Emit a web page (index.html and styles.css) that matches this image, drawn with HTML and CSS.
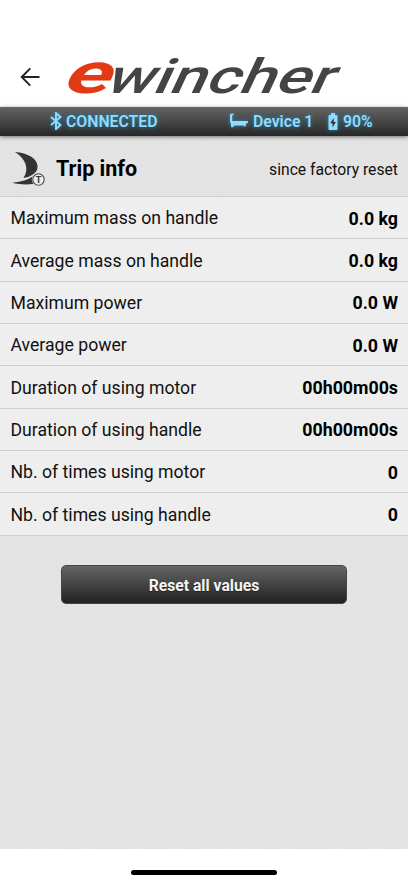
FILE: index.html
```html
<!DOCTYPE html>
<html lang="en">
<head>
    <meta charset="UTF-8">
    <meta name="viewport" content="width=device-width, initial-scale=1.0">
    <title>Ewincher - Trip info</title>
    <link rel="stylesheet" href="styles.css">
</head>
<body>
    <header class="top-bar">
        <a class="back" aria-label="Back">
            <svg width="20" height="20" viewBox="0 0 20 20" fill="none" stroke="#222" stroke-width="1.9">
                <path d="M19.500 10H2M10.300 1.400L1.700 10l8.600 8.600"/>
            </svg>
        </a>
        <svg class="logo" width="276" height="44" viewBox="0 0 276 44">
            <g transform="translate(0 38) skewX(-25)">
                <text class="logo-e" x="-7" y="0" textLength="47" lengthAdjust="spacingAndGlyphs">e</text>
                <text class="logo-word" x="36" y="0" textLength="227" lengthAdjust="spacingAndGlyphs">wincher</text>
            </g>
        </svg>
    </header>

    <div class="status-bar">
        <div class="connection">
            <svg width="12" height="18" viewBox="0 0 12 18" fill="none" stroke="#8fdcff" stroke-width="1.900">
                <path d="M1 5l9.500 8L6 17V1l4.500 4L1 13"/>
            </svg>
            <span>CONNECTED</span>
        </div>
        <div class="device">
            <svg width="20" height="16" viewBox="0 0 20 16" fill="#8fdcff">
                <path d="M1 1L4.500 .3V2.200L3.200 2.500V8H19v1.800l-1.800.8-1 3.400-1.700-1.600-9.300.2-1.200 1.600H2.200L1.900 11 1 9z"/>
            </svg>
            <span>Device 1</span>
        </div>
        <div class="battery">
            <svg width="10" height="17" viewBox="0 0 10 17">
                <path fill="#8fdcff" d="M3 0h4v2h1.500Q9.500 2 9.500 3v13q0 1-1 1h-7q-1 0-1-1V3q0-1 1-1H3z"/>
                <path fill="#333" d="M5.700 5L2.200 10.200h2.300V14.500L7.900 9H5.700z"/>
            </svg>
            <span>90%</span>
        </div>
    </div>

    <main>
        <div class="title-row">
            <svg width="35" height="36" viewBox="0 0 35 36">
                <path fill="#333" d="M4 1C17 2 26 7.500 26.500 15c.1 4-1.500 7.500-4 10L12.500 27C18.500 18 15 8 4 1z"/>
                <path fill="#e4e4e4" d="M11 28C18 26.500 24 23 27 18l1 4C23 27 17 29.500 11 30z"/>
                <path fill="#333" d="M1 31.700C11 31 18 28.500 25.500 23l.5 1.500-4 8.500C15 33.800 8 33.500 1 31.700z"/>
                <circle cx="27.500" cy="28.500" r="6.700" fill="#e4e4e4"/>
                <circle cx="27.500" cy="28.500" r="5.700" fill="#ececec" stroke="#444" stroke-width="1.100"/>
                <text class="badge" x="27.500" y="31.700" text-anchor="middle">T</text>
            </svg>
            <h1>Trip info</h1>
            <span class="since">since factory reset</span>
        </div>

        <ul class="values">
            <li><span>Maximum mass on handle</span><b>0.0 kg</b></li>
            <li><span>Average mass on handle</span><b>0.0 kg</b></li>
            <li><span>Maximum power</span><b>0.0 W</b></li>
            <li><span>Average power</span><b>0.0 W</b></li>
            <li><span>Duration of using motor</span><b>00h00m00s</b></li>
            <li><span>Duration of using handle</span><b>00h00m00s</b></li>
            <li><span>Nb. of times using motor</span><b>0</b></li>
            <li><span>Nb. of times using handle</span><b>0</b></li>
        </ul>

        <button class="reset">Reset all values</button>
    </main>

    <footer>
        <div class="home-line"></div>
    </footer>
</body>
</html>
```
FILE: styles.css
```css
* {
    box-sizing: border-box;
}

body {
    margin: 0;
    height: 883px;
    display: flex;
    flex-direction: column;
    overflow: hidden;
    background: #fff;
    color: #111;
    font-family: Roboto, sans-serif;
}

.top-bar {
    height: 107px;
    padding: 55px 0 0 20px;
    display: flex;
    align-items: flex-start;
}

.back {
    margin: 12px 27px 0 0;
}

.back svg, .logo {
    display: block;
}

.logo {
    overflow: visible;
}

.logo-e {
    font: 700 57px Roboto, sans-serif;
    fill: #e23b13;
}

.logo-word {
    font: 500 48px Roboto, sans-serif;
    fill: #444;
}

/* connection state, device and battery */
.status-bar {
    height: 29px;
    flex: none;
    display: flex;
    align-items: center;
    padding: 0 0 2px 50px;
    background: linear-gradient(#626262, #272727);
    border-top: 1px solid #666;
    box-shadow: 0 1px 4px rgba(0, 0, 0, 0.5);
    color: #8fdcff;
    font-size: 15.8px;
    font-weight: 600;
    text-shadow: 0 0 5px #2489b5;
    position: relative;
}

.status-bar div {
    display: flex;
    align-items: center;
}

.status-bar svg {
    filter: drop-shadow(0 0 2px #2489b5);
}

.connection {
    width: 179px;
    gap: 4px;
}

.device {
    width: 99px;
    gap: 4px;
}

.battery {
    gap: 5px;
}

main {
    flex: none;
    height: 713px;
    background-color: #e4e4e4;
    background-image: url("data:image/svg+xml,%3Csvg xmlns='http://www.w3.org/2000/svg' width='200' height='200'%3E%3Cfilter id='n'%3E%3CfeTurbulence type='fractalNoise' baseFrequency='.5' numOctaves='2' stitchTiles='stitch'/%3E%3CfeColorMatrix type='saturate' values='0'/%3E%3C/filter%3E%3Crect width='200' height='200' filter='url(%23n)' opacity='.04'/%3E%3C/svg%3E");
}

.title-row {
    height: 60px;
    padding: 5px 10px 0 11px;
    display: flex;
    align-items: center;
}

.title-row h1 {
    margin: 0 0 0 10px;
    font-size: 21.5px;
    font-weight: 700;
    color: #000;
}

.badge {
    font: 700 9px Roboto, sans-serif;
    fill: #333;
}

.since {
    margin: 1px 0 0 auto;
    font-size: 15.7px;
}

.values {
    list-style: none;
    margin: 0;
    padding: 0;
    background: #eee;
    border-bottom: 1px solid #ccc;
}

.values li {
    height: 42.35px;
    padding: 1px 10px 0 10.5px;
    display: flex;
    align-items: center;
    justify-content: space-between;
    border-top: 1px solid #ccc;
    font-size: 17.65px;
}

.values b {
    font-size: 17.8px;
    font-weight: 700;
    color: #000;
}

.reset {
    display: block;
    width: 286px;
    height: 39px;
    margin: 29px auto 0;
    padding: 2px 0 0;
    border: 1px solid #444;
    border-radius: 5px;
    background: linear-gradient(#656565, #222);
    color: #f4f4f4;
    font: 700 15.7px Roboto, sans-serif;
    text-shadow: 0 1px 1px #222;
}

footer {
    padding-top: 21px;
}

.home-line {
    width: 146px;
    height: 5px;
    margin: 0 auto;
    border-radius: 3px;
    background: #000;
}
```
